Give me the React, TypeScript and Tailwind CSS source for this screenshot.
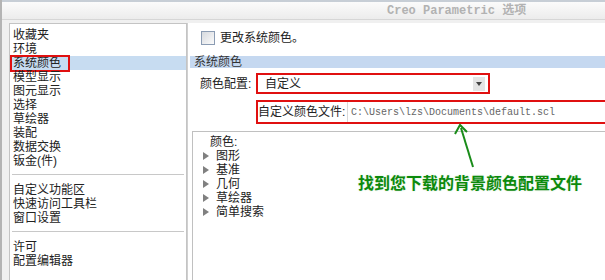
const cjk = "font-['Liberation_Sans','Noto_Sans_CJK_SC',sans-serif]";

const navTop = ["收藏夹", "环境", "系统颜色", "模型显示", "图元显示", "选择", "草绘器", "装配", "数据交换", "钣金(件)"];
const navMid = ["自定义功能区", "快速访问工具栏", "窗口设置"];
const navBottom = ["许可", "配置编辑器"];
const treeItems = ["图形", "基准", "几何", "草绘器", "简单搜索"];

function NavRow({ label }: { label: string }) {
  const selected = label === "系统颜色";
  return (
    <div className={`relative h-[14px] leading-[14px] pl-[3px] whitespace-nowrap ${selected ? "bg-[#c7dcf1]" : ""}`}>
      {label}
      {selected && (
        <span className="absolute left-0 top-[-1px] w-[60px] h-[17px] border-2 border-[#e01010]" />
      )}
    </div>
  );
}

function Separator() {
  return <div className="mx-[2px] h-[2px] border-t border-[#c8c8c8] bg-white" />;
}

export default function App() {
  return (
    <div className={`relative w-[605px] h-[280px] overflow-hidden bg-[#f0f0f0] border-l-2 border-[#b4b4b4] text-[12px] text-[#222] ${cjk}`}>
      {/* title bar */}
      <div className="h-[20px] border-t-2 border-[#c7ced6] border-b border-b-[#d6d6d6] bg-gradient-to-b from-[#fbfbfb] to-[#ececec] flex items-center pl-[385px]">
        <span className="font-['Liberation_Mono','Noto_Sans_CJK_SC',monospace] font-bold text-[12px] text-[#b2b2b2] whitespace-nowrap">
          Creo Parametric 选项
        </span>
      </div>

      <div className="flex h-[260px] pt-[3px]">
        {/* left nav */}
        <div className="shrink-0 ml-[7px] w-[178px] bg-white border border-[#c4c4c4] border-b-0 pt-[4px]">
          {navTop.map((l) => (
            <NavRow key={l} label={l} />
          ))}
          <div className="mt-[6px] mb-[7px]">
            <Separator />
          </div>
          {navMid.map((l) => (
            <NavRow key={l} label={l} />
          ))}
          <div className="mt-[6px] mb-[7px]">
            <Separator />
          </div>
          {navBottom.map((l) => (
            <NavRow key={l} label={l} />
          ))}
        </div>

        {/* right content */}
        <div className="flex-1 min-w-0 flex flex-col bg-white border-l border-[#d0d0d0] pl-[2px]">
          <div className="flex items-center h-[14px] mt-[8px] ml-[11px] gap-[5px]">
            <span className="shrink-0 w-[14px] h-[14px] border border-[#8b9cb3] bg-gradient-to-br from-[#d6d9de] to-[#fbfbfb]" />
            <span className="whitespace-nowrap">更改系统颜色。</span>
          </div>

          <div className="mt-[11px] h-[12px] leading-[12px] bg-[#c5d8f0] pl-[4px] text-[#333] whitespace-nowrap">
            系统颜色
          </div>

          <div className="flex items-center mt-[5px] h-[21px]">
            <span className="shrink-0 ml-[10px] w-[56px] whitespace-nowrap">颜色配置:</span>
            <div className="shrink-0 w-[234px] h-[21px] border-2 border-[#e01010] bg-white flex items-center">
              <span className="flex-1 pl-[7px] whitespace-nowrap">自定义</span>
              <span className="w-[12px] h-[14px] mr-[3px] bg-[#e4e4e4] flex items-center justify-center">
                <span className="w-0 h-0 border-l-[3px] border-r-[3px] border-t-[4px] border-l-transparent border-r-transparent border-t-[#444]" />
              </span>
            </div>
          </div>

          <div className="shrink-0 flex mt-[6px] ml-[66px] h-[24px] w-[360px] border-2 border-[#e01010] items-center">
            <span className="shrink-0 w-[89px] whitespace-nowrap">自定义颜色文件:</span>
            <span className="h-full flex-1 border-l border-[#d8d8d8] pl-[3px] flex items-center font-['Liberation_Mono',monospace] text-[10px] text-[#666] whitespace-nowrap">
              C:\Users\lzs\Documents\default.scl
            </span>
          </div>

          <div className="flex-1 mt-[7px] ml-[2px] border-l border-t border-[#c0c0c0] pt-[3px]">
            <div className="h-[14px] leading-[14px] pl-[17px]">颜色:</div>
            {treeItems.map((t) => (
              <div key={t} className="flex items-center h-[14px] leading-[14px] pl-[10px]">
                <span className="w-0 h-0 border-t-[4px] border-b-[4px] border-l-[6px] border-t-transparent border-b-transparent border-l-[#808080]" />
                <span className="ml-[7px] whitespace-nowrap">{t}</span>
              </div>
            ))}
          </div>
        </div>
      </div>

      {/* annotation */}
      <div className="absolute left-[356px] top-[172px] text-[16px] font-bold text-[#0c8a0c] whitespace-nowrap [text-shadow:0_0_2px_#cfe8cf]">
        找到您下载的背景颜色配置文件
      </div>
      <svg className="absolute left-0 top-0 pointer-events-none" width="605" height="280">
        <line x1="471" y1="167" x2="459" y2="128" stroke="#1a8c1a" strokeWidth="2" />
        <polyline points="453,134 458,125 465,132" fill="none" stroke="#1a8c1a" strokeWidth="2" />
      </svg>
    </div>
  );
}
